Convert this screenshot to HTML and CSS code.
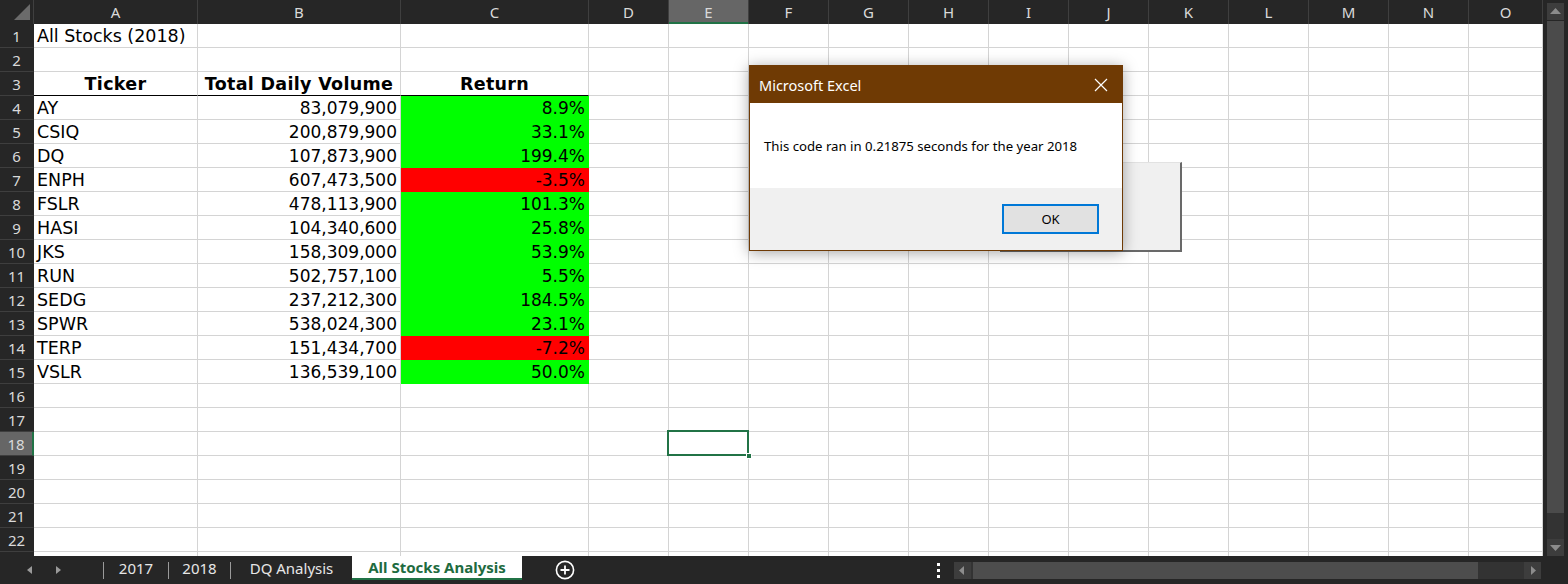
FILE: index.html
```html
<!DOCTYPE html>
<html>
<head>
<meta charset="utf-8">
<link rel="stylesheet" href="styles.css">
</head>
<body>
<div class="main">
  <div class="sheet">
    <table class="grid">
      <colgroup>
        <col class="c-rh"><col class="c-a"><col class="c-b"><col class="c-c">
        <col class="c-n"><col class="c-n"><col class="c-n"><col class="c-n"><col class="c-n"><col class="c-n"><col class="c-n"><col class="c-n"><col class="c-n"><col class="c-n"><col class="c-n">
        <col class="c-o">
      </colgroup>
      <thead>
        <tr class="hdr">
          <th class="corner"><svg width="34" height="24" viewBox="0 0 34 24"><polygon points="30,4 30,20 14,20" fill="#6b6b6b"/></svg></th>
          <th>A</th><th>B</th><th>C</th><th>D</th><th class="sel">E</th><th>F</th><th>G</th><th>H</th><th>I</th><th>J</th><th>K</th><th>L</th><th>M</th><th>N</th><th>O</th>
        </tr>
      </thead>
      <tbody>
        <tr><th>1</th><td>All Stocks (2018)</td><td></td><td></td><td></td><td></td><td></td><td></td><td></td><td></td><td></td><td></td><td></td><td></td><td></td><td></td></tr>
        <tr><th>2</th><td></td><td></td><td></td><td></td><td></td><td></td><td></td><td></td><td></td><td></td><td></td><td></td><td></td><td></td><td></td></tr>
        <tr><th>3</th><td class="h">Ticker</td><td class="h">Total Daily Volume</td><td class="h">Return</td><td></td><td></td><td></td><td></td><td></td><td></td><td></td><td></td><td></td><td></td><td></td><td></td></tr>
        <tr><th>4</th><td>AY</td><td class="num">83,079,900</td><td class="num pos">8.9%</td><td></td><td></td><td></td><td></td><td></td><td></td><td></td><td></td><td></td><td></td><td></td><td></td></tr>
        <tr><th>5</th><td>CSIQ</td><td class="num">200,879,900</td><td class="num pos">33.1%</td><td></td><td></td><td></td><td></td><td></td><td></td><td></td><td></td><td></td><td></td><td></td><td></td></tr>
        <tr><th>6</th><td>DQ</td><td class="num">107,873,900</td><td class="num pos">199.4%</td><td></td><td></td><td></td><td></td><td></td><td></td><td></td><td></td><td></td><td></td><td></td><td></td></tr>
        <tr><th>7</th><td>ENPH</td><td class="num">607,473,500</td><td class="num neg">-3.5%</td><td></td><td></td><td></td><td></td><td></td><td></td><td></td><td></td><td></td><td></td><td></td><td></td></tr>
        <tr><th>8</th><td>FSLR</td><td class="num">478,113,900</td><td class="num pos">101.3%</td><td></td><td></td><td></td><td></td><td></td><td></td><td></td><td></td><td></td><td></td><td></td><td></td></tr>
        <tr><th>9</th><td>HASI</td><td class="num">104,340,600</td><td class="num pos">25.8%</td><td></td><td></td><td></td><td></td><td></td><td></td><td></td><td></td><td></td><td></td><td></td><td></td></tr>
        <tr><th>10</th><td>JKS</td><td class="num">158,309,000</td><td class="num pos">53.9%</td><td></td><td></td><td></td><td></td><td></td><td></td><td></td><td></td><td></td><td></td><td></td><td></td></tr>
        <tr><th>11</th><td>RUN</td><td class="num">502,757,100</td><td class="num pos">5.5%</td><td></td><td></td><td></td><td></td><td></td><td></td><td></td><td></td><td></td><td></td><td></td><td></td></tr>
        <tr><th>12</th><td>SEDG</td><td class="num">237,212,300</td><td class="num pos">184.5%</td><td></td><td></td><td></td><td></td><td></td><td></td><td></td><td></td><td></td><td></td><td></td><td></td></tr>
        <tr><th>13</th><td>SPWR</td><td class="num">538,024,300</td><td class="num pos">23.1%</td><td></td><td></td><td></td><td></td><td></td><td></td><td></td><td></td><td></td><td></td><td></td><td></td></tr>
        <tr><th>14</th><td>TERP</td><td class="num">151,434,700</td><td class="num neg">-7.2%</td><td></td><td></td><td></td><td></td><td></td><td></td><td></td><td></td><td></td><td></td><td></td><td></td></tr>
        <tr><th>15</th><td>VSLR</td><td class="num">136,539,100</td><td class="num pos">50.0%</td><td></td><td></td><td></td><td></td><td></td><td></td><td></td><td></td><td></td><td></td><td></td><td></td></tr>
        <tr><th>16</th><td></td><td></td><td></td><td></td><td></td><td></td><td></td><td></td><td></td><td></td><td></td><td></td><td></td><td></td><td></td></tr>
        <tr><th>17</th><td></td><td></td><td></td><td></td><td></td><td></td><td></td><td></td><td></td><td></td><td></td><td></td><td></td><td></td><td></td></tr>
        <tr><th class="sel">18</th><td></td><td></td><td></td><td></td><td class="active"></td><td></td><td></td><td></td><td></td><td></td><td></td><td></td><td></td><td></td><td></td></tr>
        <tr><th>19</th><td></td><td></td><td></td><td></td><td></td><td></td><td></td><td></td><td></td><td></td><td></td><td></td><td></td><td></td><td></td></tr>
        <tr><th>20</th><td></td><td></td><td></td><td></td><td></td><td></td><td></td><td></td><td></td><td></td><td></td><td></td><td></td><td></td><td></td></tr>
        <tr><th>21</th><td></td><td></td><td></td><td></td><td></td><td></td><td></td><td></td><td></td><td></td><td></td><td></td><td></td><td></td><td></td></tr>
        <tr><th>22</th><td></td><td></td><td></td><td></td><td></td><td></td><td></td><td></td><td></td><td></td><td></td><td></td><td></td><td></td><td></td></tr>
        <tr><th></th><td></td><td></td><td></td><td></td><td></td><td></td><td></td><td></td><td></td><td></td><td></td><td></td><td></td><td></td><td></td></tr>
      </tbody>
    </table>
  </div>
  <div class="vscroll">
    <div class="sbtn"><svg width="17" height="17" viewBox="0 0 17 17"><polygon points="3,11 14,11 8.5,5" fill="#8c8c8c"/></svg></div>
    <div class="vthumb"></div>
    <div class="vtrack"></div>
    <div class="sbtn"><svg width="17" height="17" viewBox="0 0 17 17"><polygon points="3,6 14,6 8.5,12" fill="#8c8c8c"/></svg></div>
  </div>
</div>

<div class="tabbar">
  <div class="nav">
    <svg width="8" height="10" viewBox="0 0 8 10"><polygon points="6,1 6,9 1,5" fill="#9a9a9a"/></svg>
    <svg width="8" height="10" viewBox="0 0 8 10"><polygon points="2,1 2,9 7,5" fill="#9a9a9a"/></svg>
  </div>
  <span class="sep"></span>
  <span class="tab t1">2017</span>
  <span class="sep"></span>
  <span class="tab t2">2018</span>
  <span class="sep"></span>
  <span class="tab t3">DQ Analysis</span>
  <span class="tab active">All Stocks Analysis</span>
  <span class="add"><svg width="20" height="20" viewBox="0 0 20 20"><circle cx="10" cy="10" r="8.6" fill="none" stroke="#ffffff" stroke-width="1.6"/><path d="M10 5.5V14.5M5.5 10H14.5" stroke="#ffffff" stroke-width="1.8"/></svg></span>
  <span class="dots"><i></i><i></i><i></i></span>
  <div class="hscroll">
    <div class="hbtn"><svg width="16" height="17" viewBox="0 0 16 17"><polygon points="10,4 10,13 5,8.5" fill="#8c8c8c"/></svg></div>
    <div class="hthumb"></div>
    <div class="htrack"></div>
    <div class="hbtn"><svg width="17" height="17" viewBox="0 0 17 17"><polygon points="7,4 7,13 12,8.5" fill="#8c8c8c"/></svg></div>
  </div>
</div>

<div class="behind"></div>
<div class="dialog">
  <div class="dlg-title">
    <span>Microsoft Excel</span>
    <svg class="dlg-close" width="14" height="14" viewBox="0 0 14 14"><path d="M1 1L13 13M13 1L1 13" stroke="#ffffff" stroke-width="1.2"/></svg>
  </div>
  <div class="dlg-body">This code ran in 0.21875 seconds for the year 2018</div>
  <div class="dlg-foot"><button class="ok">OK</button></div>
</div>
</body>
</html>
```

FILE: styles.css
```css
*, *::before, *::after { box-sizing: border-box; }
html, body { margin: 0; padding: 0; }
body {
  width: 1568px;
  height: 584px;
  overflow: hidden;
  background: #262626;
  position: relative;
  font-family: "DejaVu Sans", Verdana, sans-serif;
}

.main { display: flex; height: 556px; }
.sheet { width: 1543px; height: 556px; overflow: hidden; background: #ffffff; }

.grid {
  border-collapse: separate;
  border-spacing: 0;
  table-layout: fixed;
  width: 1543px;
}
.c-rh { width: 34px; }
.c-a { width: 164px; }
.c-b { width: 203px; }
.c-c { width: 188px; }
.c-n { width: 80px; }
.c-o { width: 74px; }

.grid th {
  background: #262626;
  color: #dadada;
  font-family: "Noto Sans", "Open Sans", sans-serif;
  font-weight: 400;
  font-size: 15px;
  height: 24px;
  padding: 0;
  line-height: 22px;
  text-align: center;
}
.hdr th {
  border-right: 1px solid #3f3f3f;
  height: 24px;
  line-height: 22px;
  vertical-align: middle;
}
.hdr th.sel { background: #666666; box-shadow: inset 0 -2px 0 #217346; }
.hdr th.corner { padding: 0; line-height: 0; vertical-align: top; }
.corner svg { display: block; }

tbody th {
  border-bottom: 1px solid #3e3e3e;
  border-right: 1px solid #262626;
}
tbody th.sel { background: #666666; border-right: 2px solid #217346; }

.grid td {
  height: 24px;
  border-right: 1px solid #d4d4d4;
  border-bottom: 1px solid #d4d4d4;
  padding: 0 3px;
  font-size: 17.5px;
  line-height: 22px;
  color: #000000;
  white-space: nowrap;
  overflow: hidden;
}
.grid td.h {
  font-weight: 700;
  text-align: center;
  border-bottom-color: #000000;
  letter-spacing: 0.3px;
}
.grid td.num { text-align: right; font-size: 17px; }
.grid td.pos { background: #00ff00; border-color: #00ff00; }
.grid td.neg { background: #ff0000; border-color: #ff0000; }
.grid td.active { position: relative; overflow: visible; }
.grid td.active::before {
  content: "";
  position: absolute;
  left: -2px; top: -2px;
  width: 82px; height: 26px;
  border: 2px solid #217346;
}
.grid td.active::after {
  content: "";
  position: absolute;
  left: 77px; top: 21px;
  width: 6px; height: 6px;
  background: #217346;
  border: 1px solid #ffffff;
}

/* vertical scrollbar */
.vscroll {
  width: 25px;
  height: 556px;
  background: #262626;
  padding: 3px 4px 0 4px;
  display: flex;
  flex-direction: column;
}
.sbtn { height: 17px; background: #3d3d3d; flex: none; }
.sbtn svg { display: block; }
.vthumb { height: 492px; margin-top: 1px; background: #4b4b4b; flex: none; }
.vtrack { flex: 1; background: #333333; }

/* tab bar */
.tabbar {
  height: 28px;
  display: flex;
  align-items: center;
  background: #262626;
  font-family: "Noto Sans", "Open Sans", sans-serif;
  font-size: 15px;
  color: #e6e6e6;
}
.nav { width: 103px; display: flex; gap: 20px; padding-left: 26px; align-items: center; }
.nav svg { display: block; }
.sep { width: 1px; height: 17px; background: #9a9a9a; flex: none; }
.tab {
  display: flex;
  height: 24px;
  align-self: flex-start;
  align-items: center;
  justify-content: center;
  flex: none;
}
.t1 { width: 64px; }
.t2 { width: 61px; }
.t3 { width: 121px; }
.tab.active {
  width: 170px;
  background: #ffffff;
  color: #1e6b3f;
  font-weight: 700;
  border-bottom: 2px solid #217346;
}
.add { margin-left: 33px; width: 20px; height: 20px; }
.add svg { display: block; }
.dots { margin-left: 362px; width: 4px; display: flex; flex-direction: column; gap: 3px; }
.dots i { display: block; width: 3px; height: 3px; background: #ffffff; }
.hscroll {
  margin-left: 13px;
  width: 587px;
  height: 17px;
  display: flex;
  background: #333333;
}
.hbtn { width: 17px; height: 17px; background: #3d3d3d; flex: none; }
.hbtn svg { display: block; }
.hthumb { width: 505px; margin-left: 2px; background: #4d4d4d; }
.htrack { flex: 1; }

/* dialog */
.behind {
  position: absolute;
  left: 1000px; top: 162px;
  width: 182px; height: 90px;
  background: #f0f0f0;
  border-top: 1px solid #e2e2e2;
  border-right: 2px solid #696969;
  border-bottom: 2px solid #696969;
}
.dialog {
  position: absolute;
  left: 749px; top: 65px;
  width: 374px; height: 186px;
  background: #ffffff;
  border: 1px solid #6e3a05;
  box-shadow: 0 2px 14px rgba(0,0,0,0.35);
  font-family: "Noto Sans", "Open Sans", sans-serif;
  display: flex;
  flex-direction: column;
}
.dlg-title {
  height: 37px;
  background: #6f3a04;
  color: #ffffff;
  font-size: 14.5px;
  display: flex;
  align-items: center;
  justify-content: space-between;
  padding: 0 14px 0 9px;
  flex: none;
}
.dlg-close { display: block; }
.dlg-body {
  height: 85px;
  display: flex;
  align-items: center;
  padding-left: 14px;
  font-size: 13.2px;
  color: #000000;
  flex: none;
}
.dlg-foot {
  flex: 1;
  background: #f0f0f0;
  display: flex;
  justify-content: flex-end;
  align-items: flex-start;
  padding: 16px 23px 0 0;
}
.ok {
  width: 97px; height: 30px;
  background: #e1e1e1;
  border: 2px solid #0078d7;
  font-family: "Noto Sans", "Open Sans", sans-serif;
  font-size: 13px;
  color: #000000;
  padding: 0;
}
```
